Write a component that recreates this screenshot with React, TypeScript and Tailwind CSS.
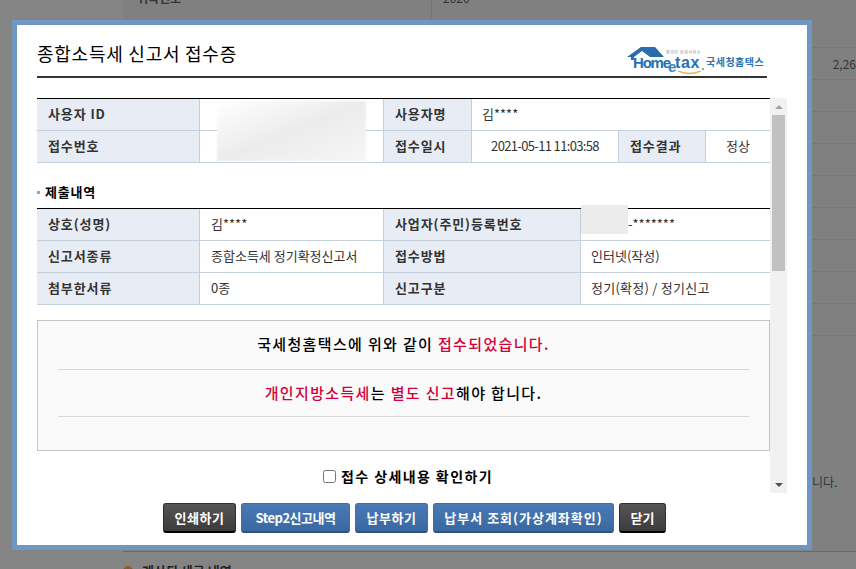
const font = "[font-family:'Noto_Sans_CJK_KR','Liberation_Sans',sans-serif]";
const bgRows = [1, 2, 3, 4, 5, 6, 7, 8];

function Th({ children, className = "" }: { children: React.ReactNode; className?: string }) {
  return (
    <div className={`flex items-center border-r border-[#c5d0de] bg-[#e8ecf4] pb-[2px] pl-[11px] text-[13px] font-bold tracking-[0.9px] whitespace-nowrap text-[#333] ${className}`}>
      {children}
    </div>
  );
}

function Td({ children, className = "" }: { children?: React.ReactNode; className?: string }) {
  return <div className={`flex items-center bg-white pb-[2px] text-[13px] whitespace-nowrap text-[#333] ${className}`}>{children}</div>;
}

function Logo() {
  return (
    <div className="relative h-[28px] w-[138px]">
      <svg className="absolute left-0 top-0" width="38" height="14" viewBox="0 0 38 14">
        <path d="M0 10 L14 0 L28 0 L37 10 L23 10 L15 4 L7 10 L7 13 L4 13 L4 10 Z" fill="#2a6cae" />
      </svg>
      <span className="absolute left-[6px] top-[7px] font-['Liberation_Sans'] text-[15px] leading-[18px] font-bold tracking-[-1.2px] text-[#2470b4]">
        Home
      </span>
      <span className="absolute left-[41px] top-[12px] font-['Liberation_Sans'] text-[15px] leading-[16px] font-bold text-[#2f86c0]">
        e
      </span>
      <span className="absolute left-[48px] top-[7px] font-['Liberation_Sans'] text-[16px] leading-[18px] font-bold tracking-[0.6px] text-[#2470b4]">
        tax
      </span>
      <span className="absolute left-[75px] top-[21px] h-[2px] w-[2px] rounded-full bg-[#35a84a]" />
      <span className="absolute left-[79px] top-[8px] text-[10px] leading-[14px] font-bold tracking-[0.5px] whitespace-nowrap text-[#2a74b4]">
        국세청홈택스
      </span>
      <span className="absolute left-[39px] top-[3px] text-[4px] leading-[5px] tracking-[0.5px] whitespace-nowrap text-[#7b93ad]">
        편리한 납세서비스
      </span>
      <svg className="absolute left-[50px] top-[23px]" width="25" height="5" viewBox="0 0 25 5">
        <path d="M1 1 Q12 6 24 1" stroke="#eda93a" strokeWidth="1.3" fill="none" />
      </svg>
    </div>
  );
}

function Button({ label, dark, className }: { label: string; dark?: boolean; className: string }) {
  return (
    <button
      className={`h-[30px] rounded-[3px] border text-[13px] font-bold whitespace-nowrap text-white ${className} ${
        dark
          ? "border-[#2f2f2f] border-b-2 border-b-black bg-gradient-to-b from-[#555] to-[#3c3c3c]"
          : "border-[#3f6eaa] border-b-2 border-b-[#2a5288] bg-gradient-to-b from-[#4a7ab8] to-[#3a689f]"
      }`}
    >
      {label}
    </button>
  );
}

function Scrollbar() {
  return (
    <div className="flex w-[17px] shrink-0 flex-col items-center bg-[#f1f1f1]">
      <div className="flex h-[17px] items-center justify-center">
        <div className="h-0 w-0 border-x-[4px] border-b-[4px] border-x-transparent border-b-[#a3a3a3]" />
      </div>
      <div className="h-[156px] w-[13px] bg-[#c1c1c1]" />
      <div className="flex-1" />
      <div className="flex h-[17px] items-center justify-center">
        <div className="h-0 w-0 border-x-[4px] border-t-[4px] border-x-transparent border-t-[#505050]" />
      </div>
    </div>
  );
}

export default function App() {
  const row = "flex h-[32px] border-b border-[#c5d0de]";
  return (
    <div className={`relative h-[569px] w-[856px] overflow-hidden bg-[#848484] ${font}`}>
      {/* dimmed page behind the dialog */}
      <div className="ml-[123px] h-[552px] border-b border-[#6a6a6a] bg-[#808080] text-[12px] text-[#333]">
        <div className="flex h-[48px] border-b border-[#777]">
          <div className="-mt-[11px] w-[308px] pl-[14px] font-bold">귀속연도</div>
          <div className="-mt-[11px] border-l border-[#777] pl-[11px]">2020</div>
        </div>
        <div className="flex h-[32px] justify-end border-b border-[#777] pt-[7px]">2,26</div>
        {bgRows.map((r) => (
          <div key={r} className="h-[32px] border-b border-[#777]" />
        ))}
      </div>
      <div className="absolute left-[812px] top-[473px] text-[12px] text-[#24384a]">니다.</div>
      <div className="ml-[123px] mt-[9px] flex items-center gap-[9px] text-[13px] font-bold text-[#222]">
        <span className="h-[10px] w-[10px] rounded-full bg-[#8a5a2a]" />
        계산된 세금 내역
      </div>

      {/* dialog */}
      <div className="absolute left-[12px] top-[20px] h-[530px] w-[800px] border-[5px] border-[#7096c4] bg-white">
        <div className="mx-[20px] flex h-[53px] w-[730px] items-end justify-between border-b-2 border-[#333] pb-[1px]">
          <h1 className="mb-[10px] text-[18px] leading-[24px] font-normal tracking-[0.75px] text-black">
            종합소득세 신고서 접수증
          </h1>
          <div className="mr-[2px]">
            <Logo />
          </div>
        </div>

        <div className="ml-[20px] mt-[20px] flex h-[395px] w-[750px]">
          <div className="w-[733px] shrink-0 overflow-hidden">
            <div className="relative border-t border-black">
              <div className={row}>
                <Th className="w-[163px]">사용자 ID</Th>
                <Td className="w-[184px] border-r border-[#c5d0de]" />
                <Th className="w-[88px]">사용자명</Th>
                <Td className="flex-1 pl-[10px]">김****</Td>
              </div>
              <div className={row}>
                <Th className="w-[163px]">접수번호</Th>
                <Td className="w-[184px] border-r border-[#c5d0de]" />
                <Th className="w-[88px]">접수일시</Th>
                <Td className="w-[147px] justify-center border-r border-[#c5d0de] text-[12px] tracking-[-0.65px]">
                  2021-05-11 11:03:58
                </Td>
                <Th className="w-[87px]">접수결과</Th>
                <Td className="flex-1 justify-center">정상</Td>
              </div>
              {/* masked id */}
              <div className="absolute left-[180px] top-[2px] h-[60px] w-[149px] bg-gradient-to-br from-white via-[#ececec] to-[#f6f6f6] blur-[1px]" />
            </div>

            <div className="mt-[13px] flex h-[32px] items-center gap-[5px]">
              <span className="h-[3px] w-[3px] bg-[#a0a0a0]" />
              <h2 className="text-[13px] font-bold tracking-[0.8px] text-black">제출내역</h2>
            </div>

            <div className="relative w-[733px] border-t border-black">
              <div className={row}>
                <Th className="w-[163px]">상호(성명)</Th>
                <Td className="w-[184px] border-r border-[#c5d0de] pl-[11px]">김****</Td>
                <Th className="w-[197px]">사업자(주민)등록번호</Th>
                <Td className="flex-1 pl-[47px]">-*******</Td>
              </div>
              <div className={row}>
                <Th className="w-[163px]">신고서종류</Th>
                <Td className="w-[184px] border-r border-[#c5d0de] pl-[11px]">종합소득세 정기확정신고서</Td>
                <Th className="w-[197px]">접수방법</Th>
                <Td className="flex-1 pl-[10px]">인터넷(작성)</Td>
              </div>
              <div className={row}>
                <Th className="w-[163px]">첨부한서류</Th>
                <Td className="w-[184px] border-r border-[#c5d0de] pl-[11px]">0종</Td>
                <Th className="w-[197px]">신고구분</Th>
                <Td className="flex-1 pl-[10px] tracking-[0.25px]">정기(확정) / 정기신고</Td>
              </div>
              {/* masked number */}
              <div className="absolute left-[544px] top-[-4px] h-[29px] w-[47px] bg-[#ececec]" />
            </div>

            <div className="mt-[15px] h-[131px] w-[733px] border border-[#c4c4c4] bg-[#fafafa] px-[20px]">
              <p className="flex h-[49px] items-end justify-center border-b border-[#d8d8d8] pb-[14px] text-[15px] font-medium tracking-[1.35px] text-black">
                <span>
                  국세청홈택스에 위와 같이 <span className="text-[#d3003a]">접수되었습니다.</span>
                </span>
              </p>
              <p className="flex h-[47px] items-center justify-center border-b border-[#d8d8d8] text-[15px] font-medium tracking-[1.35px] text-black">
                <span>
                  <span className="text-[#d3003a]">개인지방소득세</span>는 <span className="text-[#d3003a]">별도 신고</span>
                  해야 합니다.
                </span>
              </p>
            </div>

            <label className="mt-[15px] flex items-center justify-center gap-[5px] pl-[9px] text-[14px] font-bold tracking-[1.4px] text-black">
              <input type="checkbox" className="h-[13px] w-[13px]" />
              접수 상세내용 확인하기
            </label>
          </div>
          <Scrollbar />
        </div>

        <div className="mt-[10px] flex justify-center gap-[5px] pl-[5px]">
          <Button label="인쇄하기" dark className="w-[73px] tracking-[0.5px]" />
          <Button label="Step2신고내역" className="w-[109px] tracking-[-0.5px]" />
          <Button label="납부하기" className="w-[73px] tracking-[0.5px]" />
          <Button label="납부서 조회(가상계좌확인)" className="w-[181px] tracking-[1px]" />
          <Button label="닫기" dark className="w-[47px]" />
        </div>
      </div>
    </div>
  );
}
